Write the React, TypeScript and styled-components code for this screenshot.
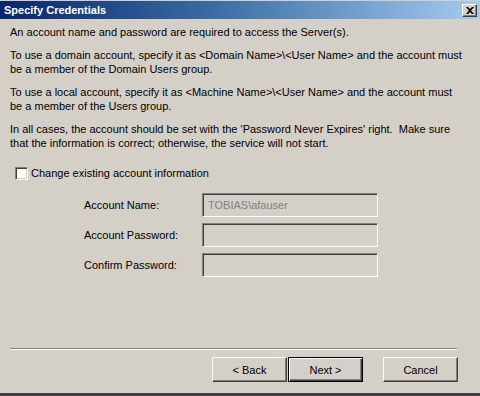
import React from 'react';
import styled, { createGlobalStyle } from 'styled-components';

const GlobalStyle = createGlobalStyle`
  html, body {
    margin: 0;
    padding: 0;
    background: #d4d0c8;
  }
  * {
    box-sizing: border-box;
  }
`;

const Window = styled.div`
  width: 480px;
  height: 396px;
  display: flex;
  flex-direction: column;
  background: #d4d0c8;
  font-family: 'Liberation Sans', Arial, sans-serif;
  font-size: 11px;
  color: #000;
  border-top: 1px solid #d4d0c8;
  border-bottom: 3px solid #404040;
  overflow: hidden;
`;

const TitleBar = styled.div`
  height: 18px;
  display: flex;
  align-items: center;
  justify-content: space-between;
  padding: 0 3px 0 4px;
  background: linear-gradient(to right, #0a246a 0%, #3a6ea5 45%, #a6caf0 100%);
  color: #fff;
  font-weight: bold;
  font-size: 11px;
`;

const CloseButton = styled.div`
  width: 15px;
  height: 13px;
  display: flex;
  align-items: center;
  justify-content: center;
  background: #d4d0c8;
  border: 1px solid;
  border-color: #fff #404040 #404040 #fff;
  box-shadow: inset -1px -1px 0 #808080;
`;

const Body = styled.div`
  flex: 1;
  display: flex;
  flex-direction: column;
  padding: 6px 10px 0 10px;
`;

const Para = styled.p`
  margin: 0 0 9px 0;
  line-height: 14px;
`;

const CheckRow = styled.label`
  display: flex;
  align-items: center;
  gap: 3px;
  margin: 7px 0 0 5px;
  height: 14px;
`;

const CheckBox = styled.span`
  width: 13px;
  height: 13px;
  background: #fff;
  border: 1px solid;
  border-color: #808080 #fff #fff #808080;
  box-shadow: inset 1px 1px 0 #404040, inset -1px -1px 0 #d4d0c8;
`;

const FormGrid = styled.div`
  display: grid;
  grid-template-columns: 118px 176px;
  row-gap: 6px;
  align-items: center;
  margin: 13px 0 0 74px;
`;

const FieldLabel = styled.span`
  line-height: 13px;
`;

const Field = styled.div`
  height: 24px;
  display: flex;
  align-items: center;
  padding: 0 5px;
  background: #d4d0c8;
  color: #808080;
  border: 1px solid;
  border-color: #808080 #fff #fff #808080;
  box-shadow: inset 1px 1px 0 #404040, inset -1px -1px 0 #d4d0c8;
`;

const Spacer = styled.div`
  flex: 1;
`;

const Separator = styled.div`
  height: 2px;
  margin: 0 13px 0 0;
  border-top: 1px solid #808080;
  border-bottom: 1px solid #fff;
`;

const ButtonRow = styled.div`
  display: flex;
  justify-content: flex-end;
  padding: 7px 12px 11px 0;
`;

const Button = styled.div<{ $default?: boolean; $gap?: number }>`
  width: 75px;
  height: 25px;
  display: flex;
  align-items: center;
  justify-content: center;
  margin-left: ${(p) => p.$gap ?? 0}px;
  background: #d4d0c8;
  border: 1px solid;
  border-color: ${(p) => (p.$default ? '#000' : '#fff #404040 #404040 #fff')};
  box-shadow: ${(p) =>
    p.$default
      ? 'inset 1px 1px 0 #fff, inset -1px -1px 0 #404040, inset -2px -2px 0 #808080'
      : 'inset -1px -1px 0 #808080'};
`;

export default function App() {
  return (
    <>
      <GlobalStyle />
      <Window>
        <TitleBar>
          <span>Specify Credentials</span>
          <CloseButton>
            <svg width="8" height="7" viewBox="0 0 8 7">
              <path d="M0 0h2l2 2 2-2h2L5 3.5 8 7H6L4 5 2 7H0l3-3.5z" fill="#000" />
            </svg>
          </CloseButton>
        </TitleBar>
        <Body>
          <Para>An account name and password are required to access the Server(s).</Para>
          <Para>
            To use a domain account, specify it as &lt;Domain Name&gt;\&lt;User Name&gt; and the account must
            <br />
            be a member of the Domain Users group.
          </Para>
          <Para>
            To use a local account, specify it as &lt;Machine Name&gt;\&lt;User Name&gt; and the account must
            <br />
            be a member of the Users group.
          </Para>
          <Para>
            In all cases, the account should be set with the 'Password Never Expires' right.&nbsp; Make sure
            <br />
            that the information is correct; otherwise, the service will not start.
          </Para>
          <CheckRow>
            <CheckBox />
            <span>Change existing account information</span>
          </CheckRow>
          <FormGrid>
            <FieldLabel>Account Name:</FieldLabel>
            <Field>TOBIAS\afauser</Field>
            <FieldLabel>Account Password:</FieldLabel>
            <Field />
            <FieldLabel>Confirm Password:</FieldLabel>
            <Field />
          </FormGrid>
          <Spacer />
          <Separator />
          <ButtonRow>
            <Button>&lt; Back</Button>
            <Button $default $gap={1}>Next &gt;</Button>
            <Button $gap={20}>Cancel</Button>
          </ButtonRow>
        </Body>
      </Window>
    </>
  );
}
